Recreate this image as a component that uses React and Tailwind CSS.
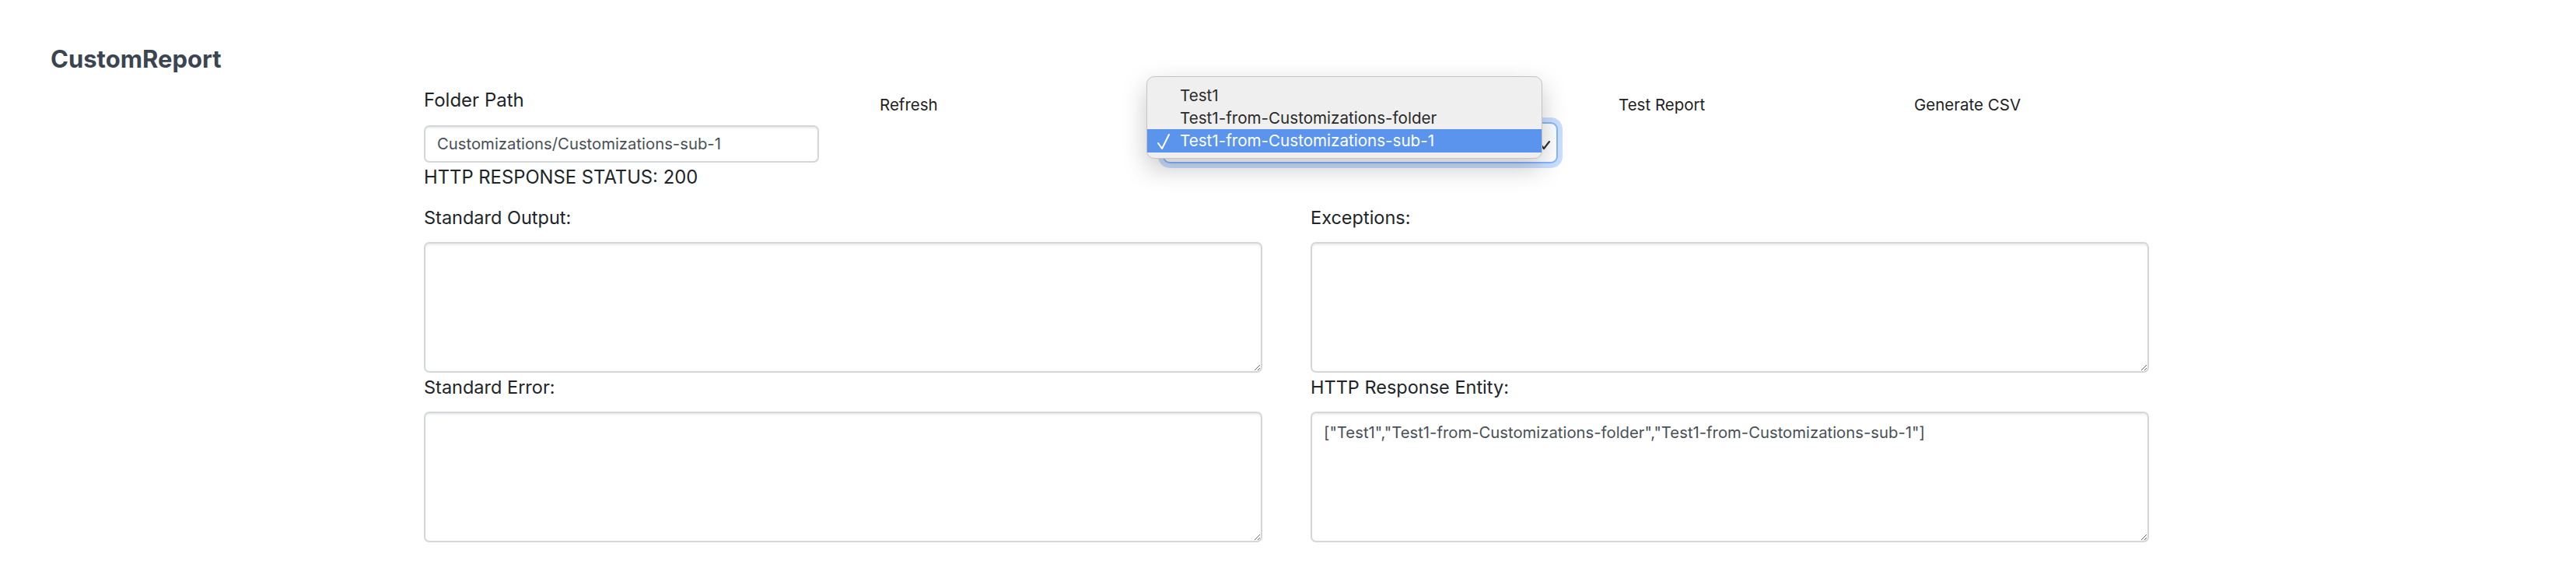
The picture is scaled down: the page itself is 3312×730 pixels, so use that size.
import React from "react";

const field =
  "block w-full border-2 border-[#d3d7db] rounded-[7px] bg-white shadow-[inset_0_2px_2px_rgba(0,0,0,0.075)] outline-none";

function Area({ label, value, mt }) {
  return (
    <div className="flex flex-col">
      <div className={`${mt} text-[23.5px] leading-[28px] text-[#212529]`}>{label}</div>
      <textarea
        readOnly
        value={value}
        className={`${field} mt-[17px] h-[168px] resize-y px-[15px] pt-[12px] text-[20.3px] leading-[26px] text-[#495057] font-['Inter']`}
      />
    </div>
  );
}

export default function App() {
  return (
    <div className="relative w-[3312px] h-[730px] bg-white font-['Inter',sans-serif] overflow-hidden">
      <h1 className="pt-[58px] pl-[65px] text-[31px] leading-[36px] font-bold text-[#3b4552]">
        CustomReport
      </h1>

      <div className="ml-[545px] w-[2218px] mt-[20px]">
        <div className="grid grid-cols-[508px_318px_508px_318px_318px] gap-x-[62px] items-start">
          <div className="flex flex-col">
            <div className="text-[24px] leading-[30px] text-[#212529]">Folder Path</div>
            <div className={`${field} mt-[17px] h-[48px] flex items-center px-[15px] text-[20.3px] text-[#495057]`}>
              Customizations/Customizations-sub-1
            </div>
            <div className="mt-[5px] text-[23.8px] leading-[28px] text-[#212529]">
              HTTP RESPONSE STATUS: 200
            </div>
          </div>

          <div>
            <button className="px-[16px] py-[7px] text-[20.5px] leading-[28px] text-[#1f1f1f] font-['Inter']">
              Refresh
            </button>
          </div>

          <div className="mt-[43px]">
            <div className="relative h-[53px] rounded-[9px] border-2 border-[#86b7fe] bg-white shadow-[0_0_0_6px_rgba(13,110,253,0.22)]">
              <svg
                className="absolute right-[8px] top-[22px]"
                width="12"
                height="12"
                viewBox="0 0 12 12"
              >
                <polyline
                  points="1,6 4,10 11,1"
                  fill="none"
                  stroke="#333"
                  strokeWidth="2.2"
                  strokeLinecap="round"
                  strokeLinejoin="round"
                />
              </svg>
            </div>
          </div>

          <div>
            <button className="px-[16px] py-[7px] text-[20.5px] leading-[28px] text-[#1f1f1f] font-['Inter']">
              Test Report
            </button>
          </div>

          <div>
            <button className="px-[16px] py-[7px] text-[20.5px] leading-[28px] text-[#1f1f1f] font-['Inter']">
              Generate CSV
            </button>
          </div>
        </div>

        <div className="grid grid-cols-2 gap-x-[62px]">
          <Area label="Standard Output:" value="" mt="mt-[24px]" />
          <Area label="Exceptions:" value="" mt="mt-[24px]" />
          <Area label="Standard Error:" value="" mt="mt-[5px]" />
          <Area
            label="HTTP Response Entity:"
            value={'["Test1","Test1-from-Customizations-folder","Test1-from-Customizations-sub-1"]'}
            mt="mt-[5px]"
          />
        </div>
      </div>

      {/* open select popup */}
      <div className="absolute left-[1474px] top-[98px] w-[509px] h-[106px] rounded-[10px] border border-[#c4c4c4] bg-[#efefef] shadow-[0_12px_32px_rgba(0,0,0,0.22)] pt-[9px] text-[20.6px] text-[#2a2a2a]">
        <div className="h-[29px] leading-[29px] pl-[42px]">Test1</div>
        <div className="h-[29px] leading-[29px] pl-[42px]">Test1-from-Customizations-folder</div>
        <div className="relative h-[30px] leading-[30px] pl-[42px] bg-[#5b94ed] text-white">
          <svg
            className="absolute left-[12px] top-[5px]"
            width="18"
            height="22"
            viewBox="0 0 18 22"
          >
            <polyline
              points="2,13 7,20 16,2"
              fill="none"
              stroke="#fff"
              strokeWidth="2"
              strokeLinecap="round"
              strokeLinejoin="round"
            />
          </svg>
          Test1-from-Customizations-sub-1
        </div>
      </div>
    </div>
  );
}
